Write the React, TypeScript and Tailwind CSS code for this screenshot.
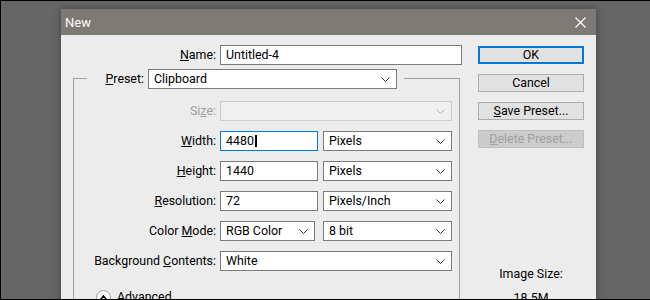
import React from 'react';

const font = { fontFamily: 'Roboto, "Noto Sans", sans-serif' };

function Chevron({ muted }: { muted?: boolean }) {
  return (
    <svg width="9" height="5" viewBox="0 0 9 5" className="shrink-0">
      <path d="M0.5 0.5 L4.5 4.5 L8.5 0.5" fill="none" stroke={muted ? '#b4b4b4' : '#333'} strokeWidth="1" />
    </svg>
  );
}

function Select({ value, w, disabled }: { value?: string; w: string; disabled?: boolean }) {
  return (
    <div
      className={`${w} h-[20px] flex items-center justify-between pl-[5px] pr-[6px] border ${
        disabled ? 'border-[#cccccc] bg-[#f0f0f0]' : 'border-[#7a7a7a] bg-white'
      }`}
    >
      <span className="text-black leading-none">{value}</span>
      <Chevron muted={disabled} />
    </div>
  );
}

function Field({ value, w, focused, cursor }: { value: string; w: string; focused?: boolean; cursor?: boolean }) {
  return (
    <div
      className={`${w} h-[20px] flex items-center pl-[5px] bg-white border ${
        focused ? 'border-[#0078d7]' : 'border-[#7a7a7a]'
      }`}
    >
      <span className="text-black leading-none">{value}</span>
      {cursor && <span className="w-[2px] h-[12px] bg-black ml-[1px]" />}
    </div>
  );
}

function Label({ children, muted }: { children: React.ReactNode; muted?: boolean }) {
  return (
    <div className={`w-[142px] text-right leading-none ${muted ? 'text-[#a0a0a0]' : 'text-black'}`}>{children}</div>
  );
}

function Row({ label, children, muted }: { label: React.ReactNode; children: React.ReactNode; muted?: boolean }) {
  return (
    <div className="flex items-center h-[20px] gap-[4px]">
      <Label muted={muted}>{label}</Label>
      <div className="flex items-center gap-[5px]">{children}</div>
    </div>
  );
}

function Button({ children, primary, disabled }: { children: React.ReactNode; primary?: boolean; disabled?: boolean }) {
  return (
    <div
      className={`h-[18px] w-full flex items-center justify-center leading-none ${
        primary
          ? 'border-2 border-[#0078d7] bg-[#e1e1e1] text-black'
          : disabled
          ? 'border border-[#bfbfbf] bg-[#cccccc] text-[#a0a0a0]'
          : 'border border-[#adadad] bg-[#e1e1e1] text-black'
      }`}
    >
      {children}
    </div>
  );
}

export default function App() {
  return (
    <div
      className="w-[650px] h-[300px] overflow-hidden bg-[#666666] border-t border-l border-b border-black text-[12.4px]"
      style={font}
    >
      <div className="ml-[60px] mt-[8px] w-[535px] shadow-[0_0_8px_rgba(0,0,0,0.35)]">
        {/* Title bar */}
        <div className="h-[26px] bg-[#7d7974] flex items-center justify-between pl-[4px] pr-[10px]">
          <span className="text-white text-[13px] leading-none">New</span>
          <svg width="11" height="11" viewBox="0 0 11 11">
            <path d="M0.5 0.5 L10.5 10.5 M10.5 0.5 L0.5 10.5" stroke="#ffffff" strokeWidth="1.2" />
          </svg>
        </div>

        {/* Body */}
        <div className="bg-[#ececec] h-[300px] flex pt-[10px]">
          <div className="w-[417px]">
            {/* Name */}
            <div className="flex items-center h-[20px] gap-[4px]">
              <div className="w-[155px] text-right leading-none">
                <u>N</u>ame:
              </div>
              <Field value="Untitled-4" w="w-[242px]" />
            </div>

            {/* Preset group */}
            <div className="ml-[12px] w-[387px] mt-[13px] border-t border-x border-[#a0a0a0] h-[300px]">
              <div className="-mt-[10px] flex items-center h-[20px]">
                <div className="w-[13px]" />
                <div className="flex items-center bg-[#ececec] pr-[7px] gap-[4px]">
                  <div className="w-[57px] text-right leading-none">
                    <u>P</u>reset:
                  </div>
                  <Select value="Clipboard" w="w-[249px]" />
                </div>
              </div>

              <div className="mt-[12px] flex flex-col gap-[10px]">
                <Row
                  muted
                  label={
                    <>
                      Si<u>z</u>e:
                    </>
                  }
                >
                  <Select w="w-[232px]" disabled />
                </Row>
                <Row
                  label={
                    <>
                      <u>W</u>idth:
                    </>
                  }
                >
                  <Field value="4480" w="w-[98px]" focused cursor />
                  <Select value="Pixels" w="w-[129px]" />
                </Row>
                <Row
                  label={
                    <>
                      <u>H</u>eight:
                    </>
                  }
                >
                  <Field value="1440" w="w-[98px]" />
                  <Select value="Pixels" w="w-[129px]" />
                </Row>
                <Row
                  label={
                    <>
                      <u>R</u>esolution:
                    </>
                  }
                >
                  <Field value="72" w="w-[98px]" />
                  <Select value="Pixels/Inch" w="w-[129px]" />
                </Row>
                <div className="flex items-center h-[20px] gap-[4px]">
                  <Label>
                    Color <u>M</u>ode:
                  </Label>
                  <div className="flex items-center gap-[8px]">
                    <Select value="RGB Color" w="w-[95px]" />
                    <Select value="8 bit" w="w-[129px]" />
                  </div>
                </div>
                <Row
                  label={
                    <>
                      Background <u>C</u>ontents:
                    </>
                  }
                >
                  <Select value="White" w="w-[232px]" />
                </Row>
              </div>

              {/* Advanced */}
              <div className="mt-[19px] ml-[22px] flex items-center gap-[6px]">
                <div className="w-[15px] h-[15px] rounded-full border border-[#9a9a9a] bg-white flex items-center justify-center">
                  <svg width="7" height="5" viewBox="0 0 7 5">
                    <path d="M0.5 4.5 L3.5 1 L6.5 4.5" fill="none" stroke="#000" strokeWidth="1.5" />
                  </svg>
                </div>
                <span className="leading-none">
                  <u>A</u>dvanced
                </span>
              </div>
            </div>
          </div>

          {/* Buttons */}
          <div className="w-[106px] pt-[1px] flex flex-col">
            <div className="flex flex-col gap-[10px]">
              <Button primary>OK</Button>
              <Button>Cancel</Button>
              <Button>
                <span>
                  <u>S</u>ave Preset...
                </span>
              </Button>
              <Button disabled>
                <span>
                  <u>D</u>elete Preset...
                </span>
              </Button>
            </div>
            <div className="mt-[120px] text-center leading-none">Image Size:</div>
            <div className="mt-[12px] text-center leading-none">18.5M</div>
          </div>
        </div>
      </div>
    </div>
  );
}
